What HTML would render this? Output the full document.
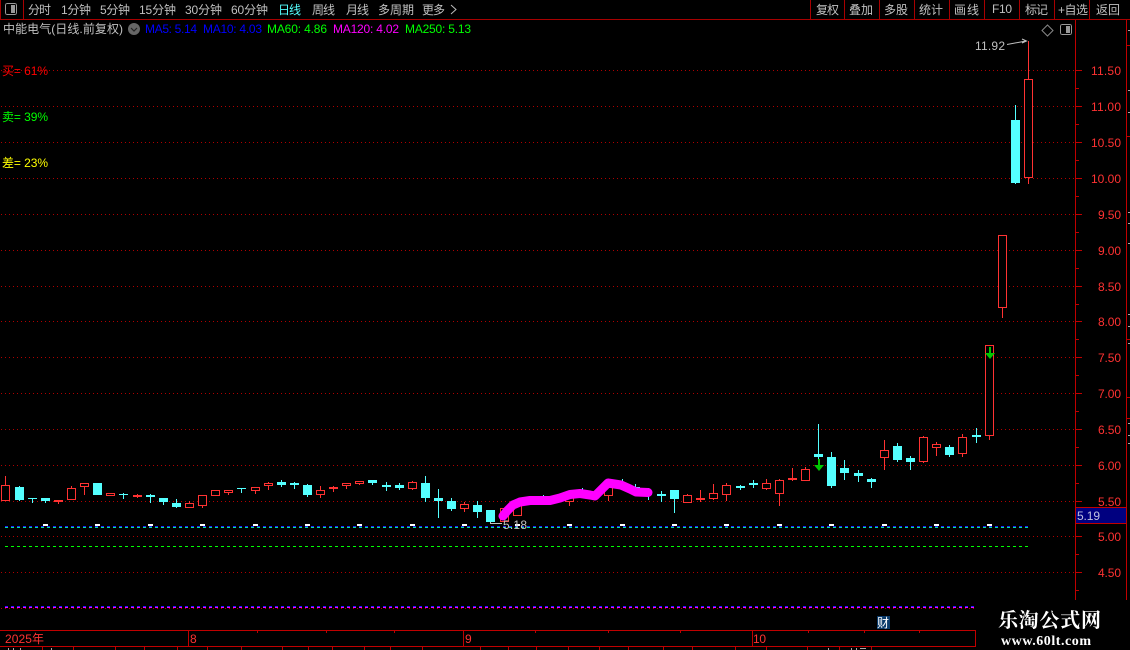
<!DOCTYPE html>
<html><head><meta charset="utf-8"><style>
html,body{margin:0;padding:0;background:#000;width:1130px;height:650px;overflow:hidden}
svg{display:block}
text{font-family:"Liberation Sans","WenQuanYi Zen Hei","Noto Sans CJK SC",sans-serif;font-size:12px}
.t text{fill:#c0c0c0}
.a text{fill:#ff3232}
</style></head><body>
<svg width="1130" height="650" viewBox="0 0 1130 650" shape-rendering="crispEdges">
<!-- dotted grid -->
<path stroke="#b00000" stroke-dasharray="1 3" fill="none" d="M1 70.5H1075M1 106.5H1075M1 142.5H1075M1 178.5H1075M1 214.5H1075M1 250.5H1075M1 286.5H1075M1 321.5H1075M1 357.5H1075M1 393.5H1075M1 429.5H1075M1 465.5H1075M1 501.5H1075M1 536.5H1075M1 572.5H1075M1 608.5H977"/>
<!-- toolbar -->
<path stroke="#a80000" fill="none" d="M0 19.5H1130M0.5 0V19M23.5 0V19M810.5 0V19M844.5 0V19M879.5 0V19M914.5 0V19M949.5 0V19M984.5 0V19M1019.5 0V19M1054.5 0V19M1089.5 0V19"/>
<rect x="5.5" y="3.5" width="11" height="11" rx="2" fill="none" stroke="#999"/><rect x="11" y="5" width="4" height="8" fill="#999"/>
<g class="t">
<text x="28" y="14" textLength="23">分时</text>
<text x="61" y="14" textLength="30">1分钟</text>
<text x="100" y="14" textLength="30">5分钟</text>
<text x="139" y="14" textLength="37">15分钟</text>
<text x="185" y="14" textLength="37">30分钟</text>
<text x="231" y="14" textLength="37">60分钟</text>
<text x="278" y="14" textLength="23" style="fill:#54ffff">日线</text>
<text x="312" y="14" textLength="23">周线</text>
<text x="346" y="14" textLength="23">月线</text>
<text x="378" y="14" textLength="36">多周期</text>
<text x="422" y="14" textLength="23">更多</text>
<text x="816" y="14" textLength="23">复权</text>
<text x="849" y="14" textLength="24">叠加</text>
<text x="884" y="14" textLength="24">多股</text>
<text x="919" y="14" textLength="24">统计</text>
<text x="954" y="14" textLength="25">画线</text>
<text x="992" y="13" textLength="20">F10</text>
<text x="1025" y="14" textLength="23">标记</text>
<text x="1058" y="14" textLength="30">+自选</text>
<text x="1096" y="14" textLength="24">返回</text>
<text x="3" y="33" textLength="120">中能电气(日线.前复权)</text>
<text x="975" y="50" textLength="30">11.92</text>
</g>
<path d="M451 5L456 9.5L451 14" fill="none" stroke="#bbb" shape-rendering="auto"/>
<!-- title row -->
<circle cx="134" cy="29" r="6" fill="#666" shape-rendering="auto"/>
<path d="M131 28L134 31L137 28" fill="none" stroke="#222" stroke-width="1.2" shape-rendering="auto"/>
<text x="145" y="33" textLength="52" fill="#0000ff">MA5: 5.14</text>
<text x="203" y="33" textLength="59" fill="#0000ff">MA10: 4.03</text>
<text x="267" y="33" textLength="60" fill="#00ff00">MA60: 4.86</text>
<text x="333" y="33" textLength="66" fill="#ff00ff">MA120: 4.02</text>
<text x="405" y="33" textLength="66" fill="#00ff00">MA250: 5.13</text>
<text x="2" y="75" textLength="46" fill="#ff0000">买= 61%</text>
<text x="2" y="121" textLength="46" fill="#00ff00">卖= 39%</text>
<text x="2" y="167" textLength="46" fill="#ffff00">差= 23%</text>
<!-- dashed -->
<path fill="none" stroke="#2020ff" stroke-width="1" stroke-dasharray="3 3" d="M5 526.5H1028"/>
<path fill="none" stroke="#00e8a0" stroke-width="1" stroke-dasharray="3 3" d="M5 527.5H1028"/>
<path fill="none" stroke="#00ff00" stroke-dasharray="3 3" d="M5 546.5H1028"/>
<path fill="none" stroke="#2020ff" stroke-dasharray="3 3" d="M5 606.5H977"/>
<path fill="none" stroke="#ff00ff" stroke-dasharray="3 3" d="M5 607.5H977"/>
<g fill="#fff"><rect x="43" y="524" width="5" height="2"/><rect x="95" y="524" width="5" height="2"/><rect x="148" y="524" width="5" height="2"/><rect x="200" y="524" width="5" height="2"/><rect x="253" y="524" width="5" height="2"/><rect x="305" y="524" width="5" height="2"/><rect x="357" y="524" width="5" height="2"/><rect x="410" y="524" width="5" height="2"/><rect x="462" y="524" width="5" height="2"/><rect x="515" y="524" width="5" height="2"/><rect x="567" y="524" width="5" height="2"/><rect x="620" y="524" width="5" height="2"/><rect x="672" y="524" width="5" height="2"/><rect x="724" y="524" width="5" height="2"/><rect x="777" y="524" width="5" height="2"/><rect x="829" y="524" width="5" height="2"/><rect x="882" y="524" width="5" height="2"/><rect x="934" y="524" width="5" height="2"/><rect x="987" y="524" width="5" height="2"/></g>
<!-- red wicks -->
<path fill="none" stroke="#ff3232" d="M5.5 476V485M58.5 500V504M71.5 486V488M84.5 487V495M137.5 494V498M189.5 501V503M202.5 506V508M228.5 493V495M255.5 491V494M268.5 482V490M320.5 486V498M333.5 486V492M346.5 486V489M359.5 484V485M412.5 481V490M464.5 502V512M569.5 502V506M608.5 496V501M687.5 494V495M700.5 490V502M713.5 484V500M726.5 483V501M766.5 479V490M779.5 479V506M792.5 468V481M805.5 467V469M884.5 440V470M923.5 436V463M936.5 442V456M962.5 434V457M989.5 436V440M1002.5 308V318M1028.5 41V79M1028.5 178V184"/>
<!-- hollow red bodies -->
<g fill="#000" stroke="#ff3232">
<rect x="1.5" y="485.5" width="8" height="15"/><rect x="67.5" y="488.5" width="8" height="11"/><rect x="80.5" y="483.5" width="8" height="3"/><rect x="106.5" y="493.5" width="8" height="2"/><rect x="185.5" y="503.5" width="8" height="4"/><rect x="198.5" y="495.5" width="8" height="10"/><rect x="211.5" y="490.5" width="8" height="5"/><rect x="224.5" y="490.5" width="8" height="2"/><rect x="251.5" y="487.5" width="8" height="3"/><rect x="264.5" y="483.5" width="8" height="2"/><rect x="316.5" y="490.5" width="8" height="4"/><rect x="342.5" y="483.5" width="8" height="2"/><rect x="355.5" y="481.5" width="8" height="2"/><rect x="408.5" y="482.5" width="8" height="6"/><rect x="460.5" y="504.5" width="8" height="4"/><rect x="500.5" y="508.5" width="8" height="13"/><rect x="513.5" y="505.5" width="8" height="10"/><rect x="565.5" y="493.5" width="8" height="8"/><rect x="604.5" y="487.5" width="8" height="8"/><rect x="683.5" y="495.5" width="8" height="7"/><rect x="709.5" y="493.5" width="8" height="5"/><rect x="722.5" y="485.5" width="8" height="9"/><rect x="762.5" y="483.5" width="8" height="5"/><rect x="775.5" y="480.5" width="8" height="13"/><rect x="801.5" y="469.5" width="8" height="11"/><rect x="880.5" y="450.5" width="8" height="7"/><rect x="919.5" y="437.5" width="8" height="24"/><rect x="932.5" y="444.5" width="8" height="3"/><rect x="958.5" y="437.5" width="8" height="16"/><rect x="985.5" y="345.5" width="8" height="90"/><rect x="998.5" y="235.5" width="8" height="72"/><rect x="1024.5" y="79.5" width="8" height="98"/>
</g>
<!-- red filled -->
<g fill="#ff3232"><rect x="54" y="500" width="9" height="2"/><rect x="133" y="495" width="9" height="2"/><rect x="329" y="487" width="9" height="2"/><rect x="696" y="498" width="9" height="2"/><rect x="788" y="478" width="9" height="2"/></g>
<!-- cyan wicks -->
<path fill="none" stroke="#54ffff" d="M19.5 486V501M32.5 498V503M45.5 498V503M123.5 493V499M150.5 494V503M163.5 498V505M176.5 499V508M241.5 488V493M281.5 480V487M294.5 482V489M307.5 484V497M372.5 483V485M386.5 482V491M399.5 483V490M425.5 476V502M438.5 489V518M451.5 498V511M477.5 501V518M543.5 495V500M582.5 488V494M622.5 479V486M635.5 484V492M648.5 488V500M661.5 491V502M674.5 490V513M740.5 485V490M753.5 480V488M818.5 424V460M831.5 452V488M844.5 460V480M858.5 470V482M871.5 478V488M897.5 443V462M910.5 456V470M949.5 445V457M976.5 428V443M1015.5 105V184"/>
<!-- cyan bodies -->
<g fill="#54ffff">
<rect x="15" y="487" width="9" height="13"/><rect x="28" y="498" width="9" height="1"/><rect x="41" y="498" width="9" height="3"/><rect x="93" y="483" width="9" height="12"/><rect x="119" y="494" width="9" height="1"/><rect x="146" y="495" width="9" height="2"/><rect x="159" y="498" width="9" height="4"/><rect x="172" y="503" width="9" height="4"/><rect x="237" y="488" width="9" height="1"/><rect x="277" y="482" width="9" height="3"/><rect x="290" y="483" width="9" height="2"/><rect x="303" y="485" width="9" height="10"/><rect x="368" y="480" width="9" height="3"/><rect x="382" y="485" width="9" height="2"/><rect x="395" y="485" width="9" height="3"/><rect x="421" y="483" width="9" height="15"/><rect x="434" y="498" width="9" height="3"/><rect x="447" y="501" width="9" height="8"/><rect x="473" y="505" width="9" height="7"/><rect x="486" y="510" width="9" height="12"/><rect x="631" y="487" width="9" height="5"/><rect x="657" y="494" width="9" height="2"/><rect x="670" y="490" width="9" height="9"/><rect x="736" y="486" width="9" height="2"/><rect x="749" y="483" width="9" height="2"/><rect x="814" y="454" width="9" height="3"/><rect x="827" y="457" width="9" height="29"/><rect x="840" y="468" width="9" height="5"/><rect x="854" y="473" width="9" height="3"/><rect x="867" y="479" width="9" height="3"/><rect x="893" y="446" width="9" height="14"/><rect x="906" y="458" width="9" height="4"/><rect x="945" y="447" width="9" height="8"/><rect x="972" y="435" width="9" height="2"/><rect x="1011" y="120" width="9" height="63"/>
</g>
<!-- green arrows -->
<path fill="#00c800" d="M818 459H820V465H824L819 471L814 465H818Z" shape-rendering="auto"/>
<path fill="#00c800" d="M989 347H991V353H995L990 359L985 353H989Z" shape-rendering="auto"/>
<!-- magenta line -->
<path fill="none" stroke="#ff00ff" stroke-width="9" stroke-linejoin="round" stroke-linecap="round" shape-rendering="auto" d="M503 516L507 511L513 505L520 502L530 500.5L550 500.5L560 498L570 494.5L580 493.5L590 495L595 496L608 483L621 485L630 489L636 492L648 492.5"/>
<!-- 5.18 marker -->
<path fill="none" stroke="#c0c0c0" d="M490.5 522V524M491 523.5H502"/>
<text x="503" y="529" textLength="24" fill="#c0c0c0">5.18</text>
<!-- 11.92 marker -->
<path fill="none" stroke="#c0c0c0" shape-rendering="auto" d="M1007 44.5L1026 41M1022 39L1026.5 41L1022 43"/>
<!-- top right icons -->
<path fill="none" stroke="#888" shape-rendering="auto" d="M1047.5 25L1053 30.5L1047.5 36L1042 30.5Z"/>
<rect x="1060.5" y="24.5" width="11" height="10" rx="2" fill="none" stroke="#999"/><rect x="1066" y="26" width="4" height="7" fill="#999"/>
<!-- axis -->
<path fill="none" stroke="#c00000" d="M1075.5 20V600M1126.5 20V600M1076 70.5H1082M1076 106.5H1082M1076 142.5H1082M1076 178.5H1082M1076 214.5H1082M1076 250.5H1082M1076 286.5H1082M1076 321.5H1082M1076 357.5H1082M1076 393.5H1082M1076 429.5H1082M1076 465.5H1082M1076 501.5H1082M1076 536.5H1082M1076 572.5H1082M1076 88.5H1079M1076 124.5H1079M1076 160.5H1079M1076 196.5H1079M1076 232.5H1079M1076 268.5H1079M1076 304.5H1079M1076 339.5H1079M1076 375.5H1079M1076 411.5H1079M1076 447.5H1079M1076 483.5H1079M1076 519.5H1079M1076 554.5H1079M1076 590.5H1079M1127 45.5H1130M1127 136.5H1130M1127 339.5H1130M1127 397.5H1130M1127 418.5H1130"/>
<path fill="none" stroke="#aaa" d="M1128 30.5H1130M1128 90.5H1130M1128 112.5H1130M1128 212.5H1130M1128 223.5H1130M1128 243.5H1130M1128 314.5H1130M1128 326.5H1130M1128 343.5H1130M1128 423.5H1130M1128 435.5H1130M1128 443.5H1130"/>
<g class="a">
<text x="1091" y="75" textLength="30">11.50</text><text x="1091" y="111" textLength="30">11.00</text><text x="1091" y="147" textLength="30">10.50</text><text x="1091" y="183" textLength="30">10.00</text>
<text x="1098" y="219" textLength="23">9.50</text><text x="1098" y="255" textLength="23">9.00</text><text x="1098" y="291" textLength="23">8.50</text><text x="1098" y="326" textLength="23">8.00</text><text x="1098" y="362" textLength="23">7.50</text><text x="1098" y="398" textLength="23">7.00</text><text x="1098" y="434" textLength="23">6.50</text><text x="1098" y="470" textLength="23">6.00</text><text x="1098" y="506" textLength="23">5.50</text><text x="1098" y="541" textLength="23">5.00</text><text x="1098" y="577" textLength="23">4.50</text>
</g>
<!-- current price -->
<rect x="1075.5" y="507.5" width="51" height="16" fill="#000080" stroke="#c00000"/>
<text x="1077" y="520" textLength="23" fill="#c0c0e0">5.19</text>
<!-- bottom axis -->
<path fill="none" stroke="#c00000" d="M0 630.5H976M0 646.5H976M188.5 631V646M463.5 631V646M752.5 631V646M975.5 631V646M257.5 631V633M326.5 631V633M394.5 631V633M535.5 631V633M608.5 631V633M680.5 631V633M808.5 631V633M864.5 631V633M919.5 631V633M42.5 647V650M73.5 647V650M115.5 647V650M144.5 647V650M177.5 647V650M207.5 647V650M241.5 647V650M282.5 647V650M308.5 647V650M332.5 647V650M364.5 647V650M390.5 647V650M422.5 647V650M480.5 647V650M508.5 647V650M536.5 647V650M568.5 647V650M599.5 647V650M628.5 647V650M663.5 647V650M692.5 647V650M735.5 647V650M766.5 647V650M807.5 647V650M839.5 647V650M871.5 647V650"/>
<path fill="none" stroke="#aaa" d="M8.5 648V650M13.5 648V650M20.5 648V650M51.5 648V650M828.5 648V650M851.5 648V650M856.5 648V650M860 648.5H866"/>
<g fill="#ff3232"><text x="5" y="643" textLength="39">2025年</text><text x="190" y="643">8</text><text x="465" y="643">9</text><text x="753" y="643" textLength="13">10</text></g>
<!-- 财 -->
<rect x="877" y="616" width="13" height="13" fill="#0a3a6a"/>
<text x="877" y="627" fill="#fff">财</text>
<!-- watermark -->
<rect x="977" y="600" width="153" height="50" fill="#000"/>
<rect x="1075" y="600" width="55" height="6" fill="#000"/>
<g shape-rendering="auto">
<text x="998" y="627" textLength="103" style="font-family:'Noto Serif CJK SC','Liberation Serif',serif;font-size:20px;font-weight:700" fill="#fff">乐淘公式网</text>
<text x="1001" y="645" textLength="90" style="font-family:'Liberation Serif',serif;font-size:14px;font-weight:700" fill="#fff">www.60lt.com</text>
</g>
</svg>
</body></html>
